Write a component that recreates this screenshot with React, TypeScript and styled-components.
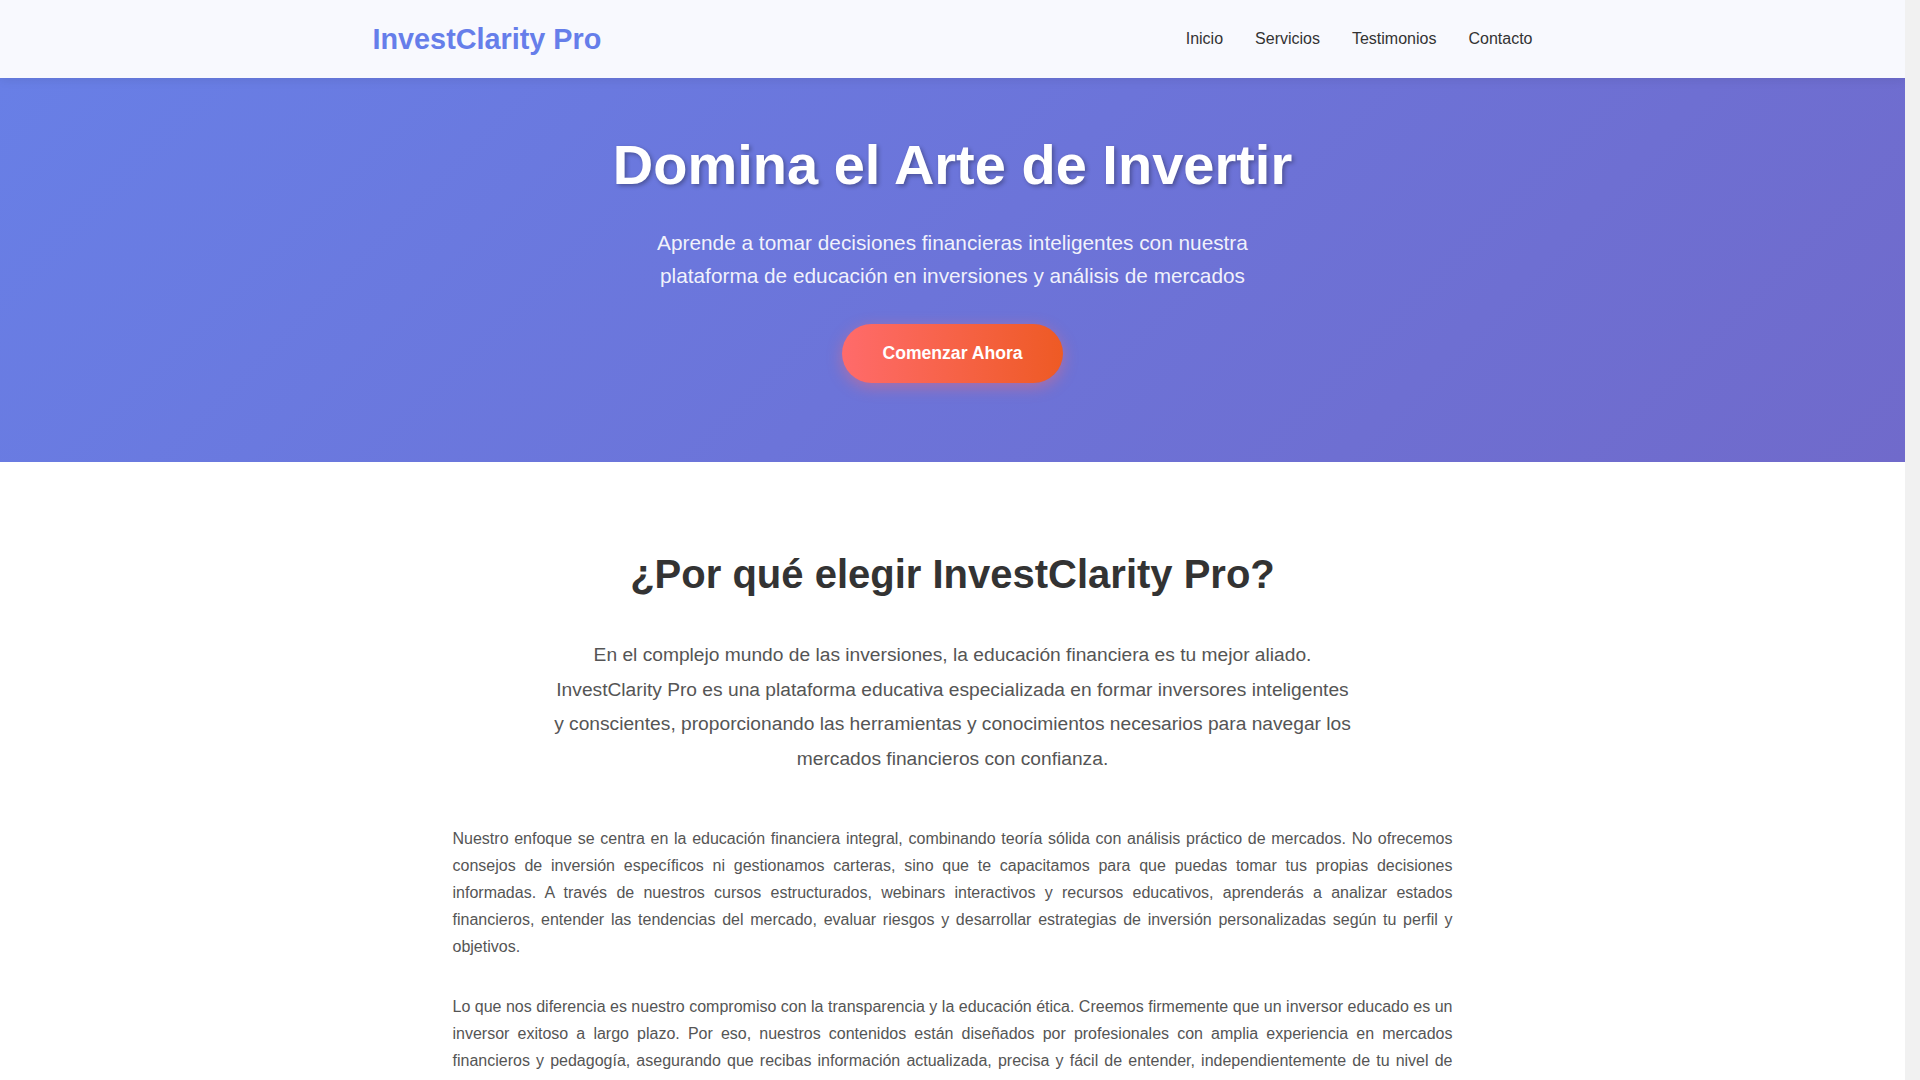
import styled, { createGlobalStyle } from "styled-components";

const GlobalStyle = createGlobalStyle`
  * {
    box-sizing: border-box;
  }

  html {
    background: #f1f1f1;
  }

  body {
    margin: 0 15px 0 0;
    min-height: 100vh;
    font-family: "Liberation Sans", Arial, sans-serif;
    color: #333;
    background: #ffffff;
  }
`;

const links = ["Inicio", "Servicios", "Testimonios", "Contacto"];

const App = () => {
  return (
    <>
      <GlobalStyle />
      <Header>
        <Container>
          <NavBar>
            <Logo>InvestClarity Pro</Logo>
            <NavLinks>
              {links.map((l) => (
                <NavLink key={l} href={`#${l.toLowerCase()}`}>
                  {l}
                </NavLink>
              ))}
            </NavLinks>
          </NavBar>
        </Container>
      </Header>

      <Hero id="inicio">
        <Container>
          <HeroTitle>Domina el Arte de Invertir</HeroTitle>
          <HeroText>
            Aprende a tomar decisiones financieras inteligentes con nuestra
            plataforma de educación en inversiones y análisis de mercados
          </HeroText>
          <CtaButton href="#contacto">Comenzar Ahora</CtaButton>
        </Container>
      </Hero>

      <About>
        <Container>
          <SectionTitle>¿Por qué elegir InvestClarity Pro?</SectionTitle>
          <Intro>
            En el complejo mundo de las inversiones, la educación financiera es
            tu mejor aliado. InvestClarity Pro es una plataforma educativa
            especializada en formar inversores inteligentes y conscientes,
            proporcionando las herramientas y conocimientos necesarios para
            navegar los mercados financieros con confianza.
          </Intro>
          <Body>
            <Paragraph>
              Nuestro enfoque se centra en la educación financiera integral,
              combinando teoría sólida con análisis práctico de mercados. No
              ofrecemos consejos de inversión específicos ni gestionamos
              carteras, sino que te capacitamos para que puedas tomar tus
              propias decisiones informadas. A través de nuestros cursos
              estructurados, webinars interactivos y recursos educativos,
              aprenderás a analizar estados financieros, entender las tendencias
              del mercado, evaluar riesgos y desarrollar estrategias de
              inversión personalizadas según tu perfil y objetivos.
            </Paragraph>
            <Paragraph>
              Lo que nos diferencia es nuestro compromiso con la transparencia y
              la educación ética. Creemos firmemente que un inversor educado es
              un inversor exitoso a largo plazo. Por eso, nuestros contenidos
              están diseñados por profesionales con amplia experiencia en
              mercados financieros y pedagogía, asegurando que recibas
              información actualizada, precisa y fácil de entender,
              independientemente de tu nivel de experiencia previo.
            </Paragraph>
          </Body>
        </Container>
      </About>
    </>
  );
};

const Container = styled.div`
  max-width: 1200px;
  margin: 0 auto;
  padding: 0 20px;
`;

const Header = styled.header`
  position: sticky;
  top: 0;
  z-index: 10;
  background: #f8f9fe;
  box-shadow: 0 2px 10px rgba(0, 0, 0, 0.08);
`;

const NavBar = styled.nav`
  height: 78px;
  display: flex;
  align-items: center;
  justify-content: space-between;
`;

const Logo = styled.div`
  font-size: 1.8rem;
  font-weight: 700;
  color: #667eea;
`;

const NavLinks = styled.div`
  display: flex;
  gap: 2rem;
`;

const NavLink = styled.a`
  font-size: 16px;
  color: #333;
  text-decoration: none;
`;

const Hero = styled.section`
  background: linear-gradient(135deg, #687fe6 0%, #6c74d9 50%, #706acb 100%);
  color: #fff;
  text-align: center;
  padding: 53px 0 79px;
`;

const HeroTitle = styled.h1`
  margin: 0 0 28px;
  font-size: 3.5rem;
  font-weight: 700;
  line-height: 1.2;
  text-shadow: 2px 2px 4px rgba(0, 0, 0, 0.3);
`;

const HeroText = styled.p`
  max-width: 600px;
  margin: 0 auto 31px;
  font-size: 1.3rem;
  line-height: 1.6;
  color: rgba(255, 255, 255, 0.92);
`;

const CtaButton = styled.a`
  display: inline-block;
  padding: 1.2rem 2.5rem;
  border-radius: 50px;
  background: linear-gradient(90deg, #ff6b6b 0%, #ee5a24 100%);
  color: #fff;
  font-size: 1.1rem;
  font-weight: 700;
  text-decoration: none;
  box-shadow: 0 4px 15px rgba(255, 107, 107, 0.45);
`;

const About = styled.section`
  padding: 88px 0 80px;
  background: #fff;
`;

const SectionTitle = styled.h2`
  margin: 0 0 40px;
  text-align: center;
  font-size: 2.5rem;
  font-weight: 700;
  line-height: 1.2;
  color: #333;
`;

const Intro = styled.p`
  max-width: 800px;
  margin: 0 auto 49px;
  text-align: center;
  font-size: 1.2rem;
  line-height: 1.8;
  color: #555;
`;

const Body = styled.div`
  max-width: 1000px;
  margin: 0 auto;
  display: flex;
  flex-direction: column;
  gap: 2rem;
`;

const Paragraph = styled.p`
  margin: 0;
  text-align: justify;
  font-size: 16px;
  line-height: 1.69;
  color: #555;
`;

export default App;
